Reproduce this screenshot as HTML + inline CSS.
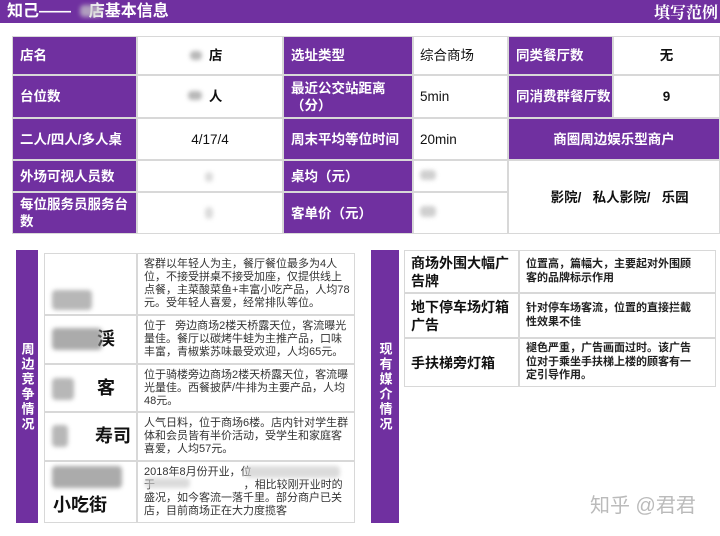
<!DOCTYPE html>
<html><head><meta charset="utf-8"><style>
*{margin:0;padding:0;box-sizing:border-box}
body{width:720px;height:536px;background:#fff;position:relative;overflow:hidden;font-family:"Liberation Sans","Noto Sans CJK SC",sans-serif}
.hdr{position:absolute;left:0;top:0;width:720px;height:23px;background:#7030a0;color:#fff}
.hdr .t{position:absolute;left:7px;top:0;font-size:16px;font-weight:bold;line-height:23px}
.hdr .r{position:absolute;right:2px;top:0;font-size:16px;font-weight:bold;line-height:23px;font-family:"Noto Serif CJK SC",serif}
.c{position:absolute;display:flex;align-items:center;font-size:13.5px;line-height:17px;border:1px solid #d8d8d8}
.p{background:#7030a0;color:#fff;font-weight:bold;padding-left:7px}
.w{background:#fff;color:#111}
.ctr{justify-content:center;text-align:center}
.b{position:absolute;background:#999;border-radius:4px;filter:blur(2px);opacity:.7}
.vb{position:absolute;background:#7030a0;color:#fff;font-weight:bold;font-size:13px;display:flex;align-items:center;justify-content:center;writing-mode:vertical-rl;letter-spacing:2px}
.s{font-size:11px;line-height:13px;color:#333;padding:0 4px 0 6px;align-items:flex-start;padding-top:4px}
.n{font-size:18px;font-weight:bold;padding-left:8px}
.m{font-size:14px;font-weight:bold;padding-left:6px;line-height:18px}
.d{font-size:11px;font-weight:bold;line-height:13.5px;padding:0 14px 0 6px;color:#222}
</style></head><body>
<div class="hdr"><div class="t">知己——&nbsp;&nbsp;&nbsp;&nbsp;店基本信息</div><div class="r">填写范例</div></div>
<div class="b" style="left:80px;top:5px;width:22px;height:12px;background:#ccc"></div>

<div class="c p" style="left:12px;top:36px;width:125px;height:39px">店名</div>
<div class="c w ctr" style="left:137px;top:36px;width:146px;height:39px;font-weight:bold">&nbsp;&nbsp;&nbsp;店</div>
<div class="c p" style="left:283px;top:36px;width:130px;height:39px">选址类型</div>
<div class="c w" style="left:413px;top:36px;width:95px;height:39px;padding-left:6px">综合商场</div>
<div class="c p" style="left:508px;top:36px;width:105px;height:39px">同类餐厅数</div>
<div class="c w ctr" style="left:613px;top:36px;width:107px;height:39px;font-weight:bold">无</div>

<div class="c p" style="left:12px;top:75px;width:125px;height:43px">台位数</div>
<div class="c w ctr" style="left:137px;top:75px;width:146px;height:43px;font-weight:bold">&nbsp;&nbsp;&nbsp;人</div>
<div class="c p" style="left:283px;top:75px;width:130px;height:43px">最近公交站距离（分）</div>
<div class="c w" style="left:413px;top:75px;width:95px;height:43px;padding-left:6px">5min</div>
<div class="c p" style="left:508px;top:75px;width:105px;height:43px">同消费群餐厅数</div>
<div class="c w ctr" style="left:613px;top:75px;width:107px;height:43px;font-weight:bold">9</div>

<div class="c p" style="left:12px;top:118px;width:125px;height:42px">二人/四人/多人桌</div>
<div class="c w ctr" style="left:137px;top:118px;width:146px;height:42px">4/17/4</div>
<div class="c p" style="left:283px;top:118px;width:130px;height:42px">周末平均等位时间</div>
<div class="c w" style="left:413px;top:118px;width:95px;height:42px;padding-left:6px">20min</div>
<div class="c p ctr" style="left:508px;top:118px;width:212px;height:42px;padding-left:0">商圈周边娱乐型商户</div>

<div class="c p" style="left:12px;top:160px;width:125px;height:32px">外场可视人员数</div>
<div class="c w" style="left:137px;top:160px;width:146px;height:32px"></div>
<div class="c p" style="left:283px;top:160px;width:130px;height:32px">桌均（元）</div>
<div class="c w" style="left:413px;top:160px;width:95px;height:32px"></div>
<div class="c w ctr" style="left:508px;top:160px;width:212px;height:74px;font-weight:bold">&nbsp;&nbsp;&nbsp;影院/&nbsp;&nbsp;&nbsp;私人影院/&nbsp;&nbsp;&nbsp;乐园</div>

<div class="c p" style="left:12px;top:192px;width:125px;height:42px">每位服务员服务台数</div>
<div class="c w" style="left:137px;top:192px;width:146px;height:42px"></div>
<div class="c p" style="left:283px;top:192px;width:130px;height:42px">客单价（元）</div>
<div class="c w" style="left:413px;top:192px;width:95px;height:42px"></div>

<div class="b" style="left:188px;top:91px;width:14px;height:9px"></div>
<div class="b" style="left:190px;top:51px;width:12px;height:9px"></div>
<div class="b" style="left:205px;top:172px;width:8px;height:10px;background:#ccc"></div>
<div class="b" style="left:205px;top:207px;width:8px;height:12px;background:#ccc"></div>
<div class="b" style="left:420px;top:170px;width:16px;height:10px;background:#bbb"></div>
<div class="b" style="left:420px;top:206px;width:16px;height:11px;background:#bbb"></div>

<div class="vb" style="left:16px;top:250px;width:22px;height:273px">周边竞争情况</div>
<div class="c w n" style="left:44px;top:253px;width:93px;height:62px"></div>
<div class="c w s" style="left:137px;top:253px;width:218px;height:62px">客群以年轻人为主，餐厅餐位最多为4人位，不接受拼桌不接受加座，仅提供线上点餐，主菜酸菜鱼+丰富小吃产品，人均78元。受年轻人喜爱，经常排队等位。</div>
<div class="c w n" style="left:44px;top:315px;width:93px;height:49px;padding-left:52px">渓</div>
<div class="c w s" style="left:137px;top:315px;width:218px;height:49px">位于&nbsp;&nbsp;&nbsp;旁边商场2楼天桥露天位，客流曝光量佳。餐厅以碳烤牛蛙为主推产品，口味丰富，青椒紫苏味最受欢迎，人均65元。</div>
<div class="c w n" style="left:44px;top:364px;width:93px;height:48px;padding-left:52px">客</div>
<div class="c w s" style="left:137px;top:364px;width:218px;height:48px">位于骑楼旁边商场2楼天桥露天位，客流曝光量佳。西餐披萨/牛排为主要产品，人均48元。</div>
<div class="c w n" style="left:44px;top:412px;width:93px;height:49px;padding-left:50px">寿司</div>
<div class="c w s" style="left:137px;top:412px;width:218px;height:49px">人气日料，位于商场6楼。店内针对学生群体和会员皆有半价活动，受学生和家庭客喜爱，人均57元。</div>
<div class="c w n" style="left:44px;top:461px;width:93px;height:62px;align-items:flex-end;padding-bottom:8px">小吃街</div>
<div class="c w s" style="left:137px;top:461px;width:218px;height:62px">2018年8月份开业，位于&nbsp;&nbsp;&nbsp;&nbsp;&nbsp;&nbsp;&nbsp;&nbsp;&nbsp;&nbsp;&nbsp;&nbsp;&nbsp;&nbsp;&nbsp;&nbsp;&nbsp;&nbsp;&nbsp;&nbsp;&nbsp;&nbsp;&nbsp;&nbsp;&nbsp;&nbsp;&nbsp;&nbsp;&nbsp;，相比较刚开业时的盛况，如今客流一落千里。部分商户已关店，目前商场正在大力度揽客</div>

<div class="b" style="left:52px;top:290px;width:40px;height:20px"></div>
<div class="b" style="left:52px;top:328px;width:50px;height:22px;background:#888"></div>
<div class="b" style="left:52px;top:378px;width:22px;height:22px"></div>
<div class="b" style="left:52px;top:425px;width:16px;height:22px"></div>
<div class="b" style="left:52px;top:466px;width:70px;height:22px;background:#888"></div>
<div class="b" style="left:245px;top:466px;width:95px;height:12px;background:#ccc"></div>
<div class="b" style="left:145px;top:478px;width:45px;height:10px;background:#ccc"></div>

<div class="vb" style="left:371px;top:250px;width:28px;height:273px">现有媒介情况</div>
<div class="c w m" style="left:404px;top:250px;width:115px;height:43px">商场外围大幅广告牌</div>
<div class="c w d" style="left:519px;top:250px;width:197px;height:43px">位置高，篇幅大，主要起对外围顾客的品牌标示作用</div>
<div class="c w m" style="left:404px;top:293px;width:115px;height:45px">地下停车场灯箱广告</div>
<div class="c w d" style="left:519px;top:293px;width:197px;height:45px">针对停车场客流，位置的直接拦截性效果不佳</div>
<div class="c w m" style="left:404px;top:338px;width:115px;height:49px">手扶梯旁灯箱</div>
<div class="c w d" style="left:519px;top:338px;width:197px;height:49px">褪色严重，广告画面过时。该广告位对于乘坐手扶梯上楼的顾客有一定引导作用。</div>

<div style="position:absolute;left:590px;top:493px;font-size:20px;color:#bbb;line-height:26px">知乎 @君君</div>
</body></html>
